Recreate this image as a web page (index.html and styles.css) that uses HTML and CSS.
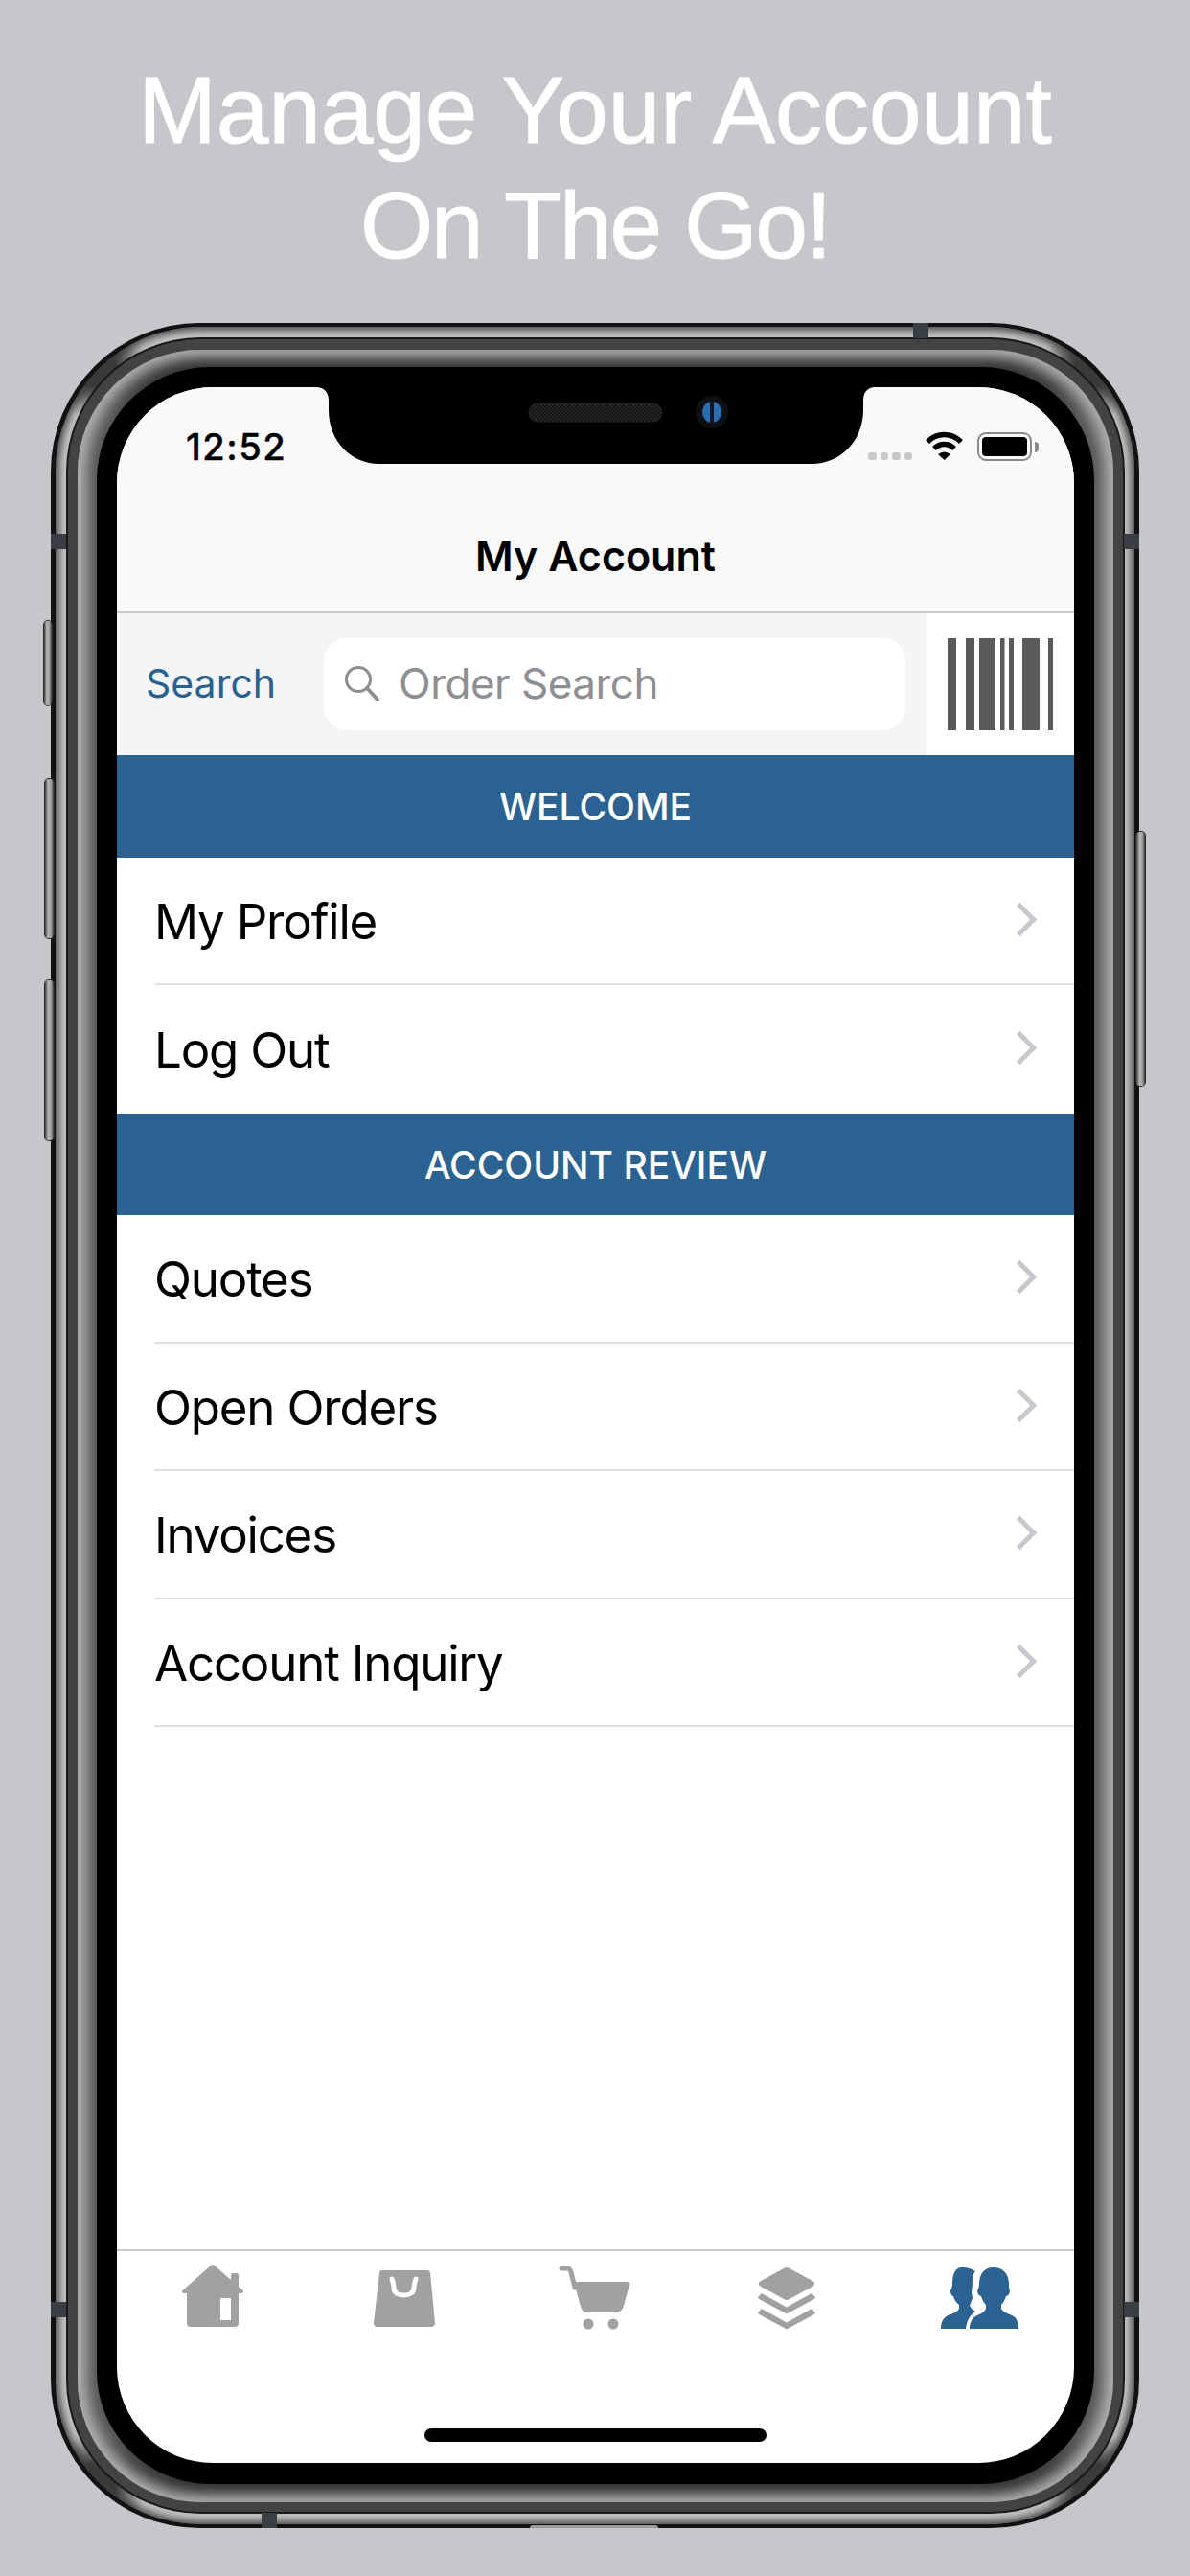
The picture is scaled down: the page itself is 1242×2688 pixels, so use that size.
FILE: index.html
```html
<!DOCTYPE html>
<html lang="en">
<head>
  <meta charset="UTF-8">
  <meta name="viewport" content="width=device-width, initial-scale=1.0">
  <title>My Account</title>
  <link rel="stylesheet" href="styles.css">
</head>
<body>
  <h1 class="headline">Manage Your Account<br><span class="headline-second">On The Go!</span></h1>

  <div class="phone">
    <span class="side-btn ring"></span>
    <span class="side-btn vol-up"></span>
    <span class="side-btn vol-down"></span>
    <span class="side-btn power"></span>
    <span class="antenna ant-top"></span>
    <span class="antenna ant-bottom"></span>
    <span class="antenna ant-left-a"></span>
    <span class="antenna ant-left-b"></span>
    <span class="antenna ant-right-a"></span>
    <span class="antenna ant-right-b"></span>
    <span class="chin"></span>

    <div class="steel"><div class="edge"><div class="band"><div class="glow"><div class="bezel">
      <div class="screen">

        <svg class="notch" viewBox="0 0 583 80">
          <defs>
            <pattern id="mesh" width="4" height="4" patternUnits="userSpaceOnUse">
              <rect width="4" height="4" fill="#141414"/>
              <circle cx="1" cy="1" r="1" fill="#2c2c2c"/>
              <circle cx="3" cy="3" r="1" fill="#2c2c2c"/>
            </pattern>
          </defs>
          <path d="M0 0C8 0 13 5 13 14V24C13 56 36 80 66 80H517C547 80 571 56 571 24V14C571 5 576 0 583 0Z" fill="#000"/>
          <rect x="222" y="17" width="139" height="19" rx="9.5" fill="url(#mesh)" stroke="#262626"/>
          <circle cx="413" cy="26" r="17" fill="#0d1116"/>
          <ellipse cx="413" cy="26" rx="10" ry="11" fill="#2a6db0"/>
          <rect x="411" y="15" width="4" height="22" fill="#0b1a2a"/>
        </svg>

        <header class="topbar">
          <div class="status">
            <span class="time">12:52</span>
            <div class="status-icons">
              <div class="signal"><i></i><i></i><i></i><i></i></div>
              <svg class="wifi" viewBox="0 0 41 30">
                <path d="M3 11C13 1 28 1 38 11" fill="none" stroke="#000" stroke-width="5.5"/>
                <path d="M10 18C16 12 25 12 31 18" fill="none" stroke="#000" stroke-width="5.5"/>
                <path d="M14 24Q20.500 19 27 24L20.500 30Z" fill="#000"/>
              </svg>
              <div class="battery"><span class="battery-fill"></span></div>
              <span class="battery-nub"></span>
            </div>
          </div>
          <div class="nav-title">My Account</div>
        </header>

        <div class="searchbar">
          <span class="search-label">Search</span>
          <div class="search-field">
            <svg class="search-icon" viewBox="0 0 38 38">
              <circle cx="15" cy="15" r="12.500" fill="none" stroke="#8e8e93" stroke-width="3"/>
              <path d="M24 24L35 36" fill="none" stroke="#8e8e93" stroke-width="4" stroke-linecap="round"/>
            </svg>
            <span class="search-hint">Order Search</span>
          </div>
          <div class="barcode">
            <svg class="barcode-bars" viewBox="0 0 110 96">
              <rect x="0" width="9" height="96"/>
              <rect x="19" width="9" height="96"/>
              <rect x="33" width="17" height="96"/>
              <rect x="55" width="4.500" height="96"/>
              <rect x="64" width="5" height="96"/>
              <rect x="78" width="18" height="96"/>
              <rect x="105" width="5" height="96"/>
            </svg>
          </div>
        </div>

        <div class="section-head">WELCOME</div>
        <div class="row"><div class="row-inner"><span>My Profile</span><i class="chevron"></i></div></div>
        <div class="row row-last"><div class="row-inner"><span>Log Out</span><i class="chevron"></i></div></div>

        <div class="section-head">ACCOUNT REVIEW</div>
        <div class="row"><div class="row-inner"><span>Quotes</span><i class="chevron"></i></div></div>
        <div class="row"><div class="row-inner"><span>Open Orders</span><i class="chevron"></i></div></div>
        <div class="row"><div class="row-inner"><span>Invoices</span><i class="chevron"></i></div></div>
        <div class="row"><div class="row-inner"><span>Account Inquiry</span><i class="chevron"></i></div></div>

        <div class="spacer"></div>

        <nav class="tabbar">
          <div class="tabs">
            <div class="tab">
              <svg viewBox="0 0 80 70"><path fill-rule="evenodd" d="M40 0Q41 0 42 1L59 16V11Q59 9 61 9H65Q67 9 67 11V23L71.500 27Q73 29 70 30H67V61Q67 65 63 65H17Q13 65 13 61V30H10Q7 29 8.500 27L38 1Q39 0 40 0ZM48 35V58H59V35Z"/></svg>
            </div>
            <div class="tab">
              <svg viewBox="0 0 80 70">
                <path d="M17 6H64Q67 6 67 9L72 61Q72 65 68 65H12Q8 65 8 61L14 9Q14 6 17 6Z"/>
                <path d="M27 15C29 20 29 22 29 24C29 30 34 32 39.500 32C45 32 50 30 50 24C50 22 50 20 52 15" fill="none" stroke="#fff" stroke-width="5" stroke-linecap="round"/>
              </svg>
            </div>
            <div class="tab">
              <svg viewBox="0 0 80 70">
                <path d="M5 4H11Q14 4 15 8L19 24" fill="none" stroke="#a1a1a1" stroke-width="5" stroke-linecap="round"/>
                <path d="M18 18H74Q77 18 76 21L70 43Q68 50 62 50H33Q27 50 25 44Z"/>
                <circle cx="33" cy="62" r="5.500"/>
                <circle cx="59" cy="62" r="5.500"/>
              </svg>
            </div>
            <div class="tab">
              <svg viewBox="0 0 80 70">
                <path d="M40 6L66 20L40 34L14 20Z" stroke="#a1a1a1" stroke-width="6" stroke-linejoin="round"/>
                <path d="M14 32L40 46.500L66 32L68 34.500L40 49.500L12 34.500Z" stroke="#a1a1a1" stroke-width="3.500" stroke-linejoin="round"/>
                <path d="M14 48L40 62.500L66 48L68 50.500L40 65.500L12 50.500Z" stroke="#a1a1a1" stroke-width="3.500" stroke-linejoin="round"/>
              </svg>
            </div>
            <div class="tab tab-active">
              <svg viewBox="0 0 80 70">
                <g transform="translate(1 3)">
                  <path d="M22 0C29 0 32 2 36 4L33 8C33 14 33 20 32 26L33 32L30 40L32 43L36 46C30 50 27 56 26 64H0C0 56 3 52 8 50C12 48 17 47 19 43V39C16 37 14 34 13 30C11 30 10 27 10 24C11 23 12 20 12 17C12 7 15 0 22 0Z"/>
                  <path d="M55 0C65 0 71 7 71 17C71 20 71 23 72 24C72 27 70 30 68 30C67 34 65 37 63 39V43C65 47 70 48 74 50C79 52 81 57 81 64H30C30 57 33 52 38 50C42 48 45 47 47 43V39C45 37 43 34 42 30C40 30 38 27 38 24C39 23 40 20 40 17C40 7 45 0 55 0Z"/>
                </g>
              </svg>
            </div>
          </div>
          <span class="home-bar"></span>
        </nav>

      </div>
    </div></div></div></div></div>
  </div>
</body>
</html>
```

FILE: styles.css
```css
/* General Styles */
* {
  box-sizing: border-box;
}

body {
  margin: 0;
  height: 100vh;
  overflow: hidden;
  background-color: #c6c7cb;
  font-family: Inter, "Noto Sans", sans-serif;
}

.headline {
  margin: 0;
  padding-top: 55px;
  height: 295px;
  color: #fff;
  font-family: "Liberation Sans", Arial, sans-serif;
  font-size: 98px;
  font-weight: 400;
  line-height: 120px;
  text-align: center;
  -webkit-text-stroke: 1px #fff;
}

.headline-second {
  letter-spacing: -2px;
}

/* Phone frame, ring inside ring */
.phone {
  position: relative;
  width: 1136px;
  height: 2301px;
  margin: 42px 0 0 53px;
  padding: 4px 5px;
  background: #121212;
  border-radius: 155px;
}

.steel {
  height: 100%;
  padding: 11px 10px 11px 11px;
  background:
    radial-gradient(circle 55px at 40px 40px, #3a3a3a 40%, transparent),
    radial-gradient(circle 55px at calc(100% - 40px) 40px, #3a3a3a 40%, transparent),
    radial-gradient(circle 55px at 40px calc(100% - 40px), #3a3a3a 40%, transparent),
    radial-gradient(circle 55px at calc(100% - 40px) calc(100% - 40px), #3a3a3a 40%, transparent),
    #c4c4c4;
  border-radius: 151px;
  box-shadow: inset 0 0 8px 3px #3c3c3c;
}

.edge {
  height: 100%;
  padding: 2px;
  background: #191919;
  border-radius: 140px;
}

.band {
  height: 100%;
  padding: 11px 10px 10px;
  background: #434343;
  border-radius: 138px;
}

.glow {
  height: 100%;
  padding: 18px 20px 19px;
  background: linear-gradient(to bottom, #222, #505050 70px, #505050 calc(100% - 70px), #222);
  border-radius: 128px;
  box-shadow:
    inset 8px 0 20px 0 #b4b4b4,
    inset -8px 0 20px 0 #b4b4b4,
    inset 0 5px 18px 0 #808080,
    inset 0 -5px 18px 0 #808080;
}

.bezel {
  height: 100%;
  padding: 21px 21px 22px;
  background: #000;
  border-radius: 118px;
}

.screen {
  position: relative;
  display: flex;
  flex-direction: column;
  height: 100%;
  overflow: hidden;
  background: #fff;
  border-radius: 100px;
}

/* Hardware bits on top of the frame */
.side-btn {
  position: absolute;
  width: 9px;
  background: linear-gradient(to right, #3a3a3a, #b4b4b4 35%, #a0a0a0 70%, #333);
  border-radius: 4px;
  box-shadow: 0 0 0 1px #2a2a2a;
}

.ring {
  left: -7px;
  top: 311px;
  width: 8px;
  height: 88px;
}

.vol-up {
  left: -6px;
  top: 476px;
  height: 166px;
}

.vol-down {
  left: -6px;
  top: 686px;
  height: 167px;
}

.power {
  right: -6px;
  top: 531px;
  height: 265px;
}

.antenna {
  position: absolute;
  width: 16px;
  height: 16px;
  background: #3a3d44;
}

.ant-top {
  left: 900px;
  top: 0;
}

.ant-bottom {
  left: 220px;
  bottom: 0;
}

.ant-left-a {
  left: 0;
  top: 220px;
}

.ant-left-b {
  left: 0;
  top: 2065px;
}

.ant-right-a {
  right: 0;
  top: 220px;
}

.ant-right-b {
  right: 0;
  top: 2065px;
}

.chin {
  position: absolute;
  left: 500px;
  bottom: 0;
  width: 134px;
  height: 3px;
  background: #9a9a9a;
  border-radius: 3px 3px 0 0;
}

.notch {
  position: absolute;
  left: 208px;
  top: 0;
  width: 583px;
  height: 80px;
}

/* Status + nav */
.topbar {
  flex: none;
  height: 236px;
  background: #f9f9f9;
  border-bottom: 2px solid #c9c9c9;
}

.status {
  display: flex;
  justify-content: space-between;
  height: 128px;
  padding: 45px 37px 0 72px;
}

.time {
  color: #000;
  font-size: 38px;
  font-weight: 500;
  line-height: 34px;
  letter-spacing: 1.5px;
  -webkit-text-stroke: 0.4px #000;
}

.status-icons {
  display: flex;
  align-items: flex-start;
  margin-top: 1px;
}

.signal {
  display: flex;
  gap: 4px;
  margin: 22px 13px 0 0;
}

.signal i {
  width: 8.500px;
  height: 8px;
  background: #c9c9c9;
  border-radius: 3px;
}

.wifi {
  width: 41px;
  height: 30px;
  margin-right: 14px;
}

.battery {
  width: 57px;
  height: 30px;
  padding: 3px;
  margin-top: 1px;
  background: #f9f9f9;
  border: 2.500px solid #8a8a8a;
  border-radius: 9px;
}

.battery-fill {
  display: block;
  height: 100%;
  background: #000;
  border-radius: 4px;
}

.battery-nub {
  width: 4px;
  height: 11px;
  margin: 11px 0 0 3px;
  background: #8a8a8a;
  border-radius: 0 4px 4px 0;
}

.nav-title {
  color: #000;
  font-size: 43px;
  font-weight: 600;
  line-height: 50px;
  text-align: center;
  margin-top: 23px;
}

/* Search */
.searchbar {
  flex: none;
  display: flex;
  align-items: stretch;
  height: 148px;
  background: #f4f5f7;
}

.search-label {
  width: 216px;
  padding: 43px 0 0 30px;
  color: #2a6190;
  font-size: 41px;
  line-height: 60px;
}

.search-field {
  display: flex;
  align-items: center;
  width: 607px;
  height: 96px;
  margin-top: 26px;
  padding: 0 0 2px 21px;
  background: #fff;
  border-radius: 24px;
}

.search-icon {
  width: 38px;
  height: 38px;
  margin-right: 19px;
}

.search-hint {
  color: #8e8e93;
  font-size: 44px;
  letter-spacing: -0.5px;
}

.barcode {
  display: flex;
  justify-content: flex-start;
  align-items: flex-start;
  width: 154px;
  margin-left: 22px;
  padding: 26px 0 0 22px;
  background: #fff;
}

.barcode-bars {
  width: 110px;
  height: 96px;
  fill: #5a5a5a;
}

/* List */
.section-head {
  flex: none;
  height: 106.500px;
  background: #2b6291;
  color: #fff;
  font-size: 39px;
  font-weight: 500;
  line-height: 107px;
  text-align: center;
}

.row {
  flex: none;
  height: 133.500px;
  padding-left: 39px;
}

.row-inner {
  display: flex;
  justify-content: space-between;
  align-items: center;
  height: 100%;
  padding-right: 44px;
  border-bottom: 2px solid #e0e0e0;
  color: #000;
  font-size: 51px;
  letter-spacing: -1.2px;
}

.row-inner span {
  padding-top: 2px;
}

.row-last .row-inner {
  border-bottom: none;
}

.chevron {
  width: 25px;
  height: 25px;
  margin-bottom: 2px;
  border-top: 5px solid #c7c7cc;
  border-right: 5px solid #c7c7cc;
  transform: rotate(45deg);
}

.spacer {
  flex: 1;
}

/* Tab bar */
.tabbar {
  flex: none;
  display: flex;
  flex-direction: column;
  align-items: center;
  height: 223px;
  padding: 14px 0 22px;
  border-top: 2px solid #cbcbcb;
}

.tabs {
  display: flex;
  width: 100%;
}

.tab {
  flex: 1;
  display: flex;
  justify-content: center;
  fill: #a1a1a1;
}

.tab svg {
  width: 80px;
  height: 70px;
  overflow: visible;
}

.tab-active {
  fill: #2b6291;
}

.home-bar {
  width: 357px;
  height: 14px;
  margin-top: auto;
  background: #000;
  border-radius: 7px;
}
```
